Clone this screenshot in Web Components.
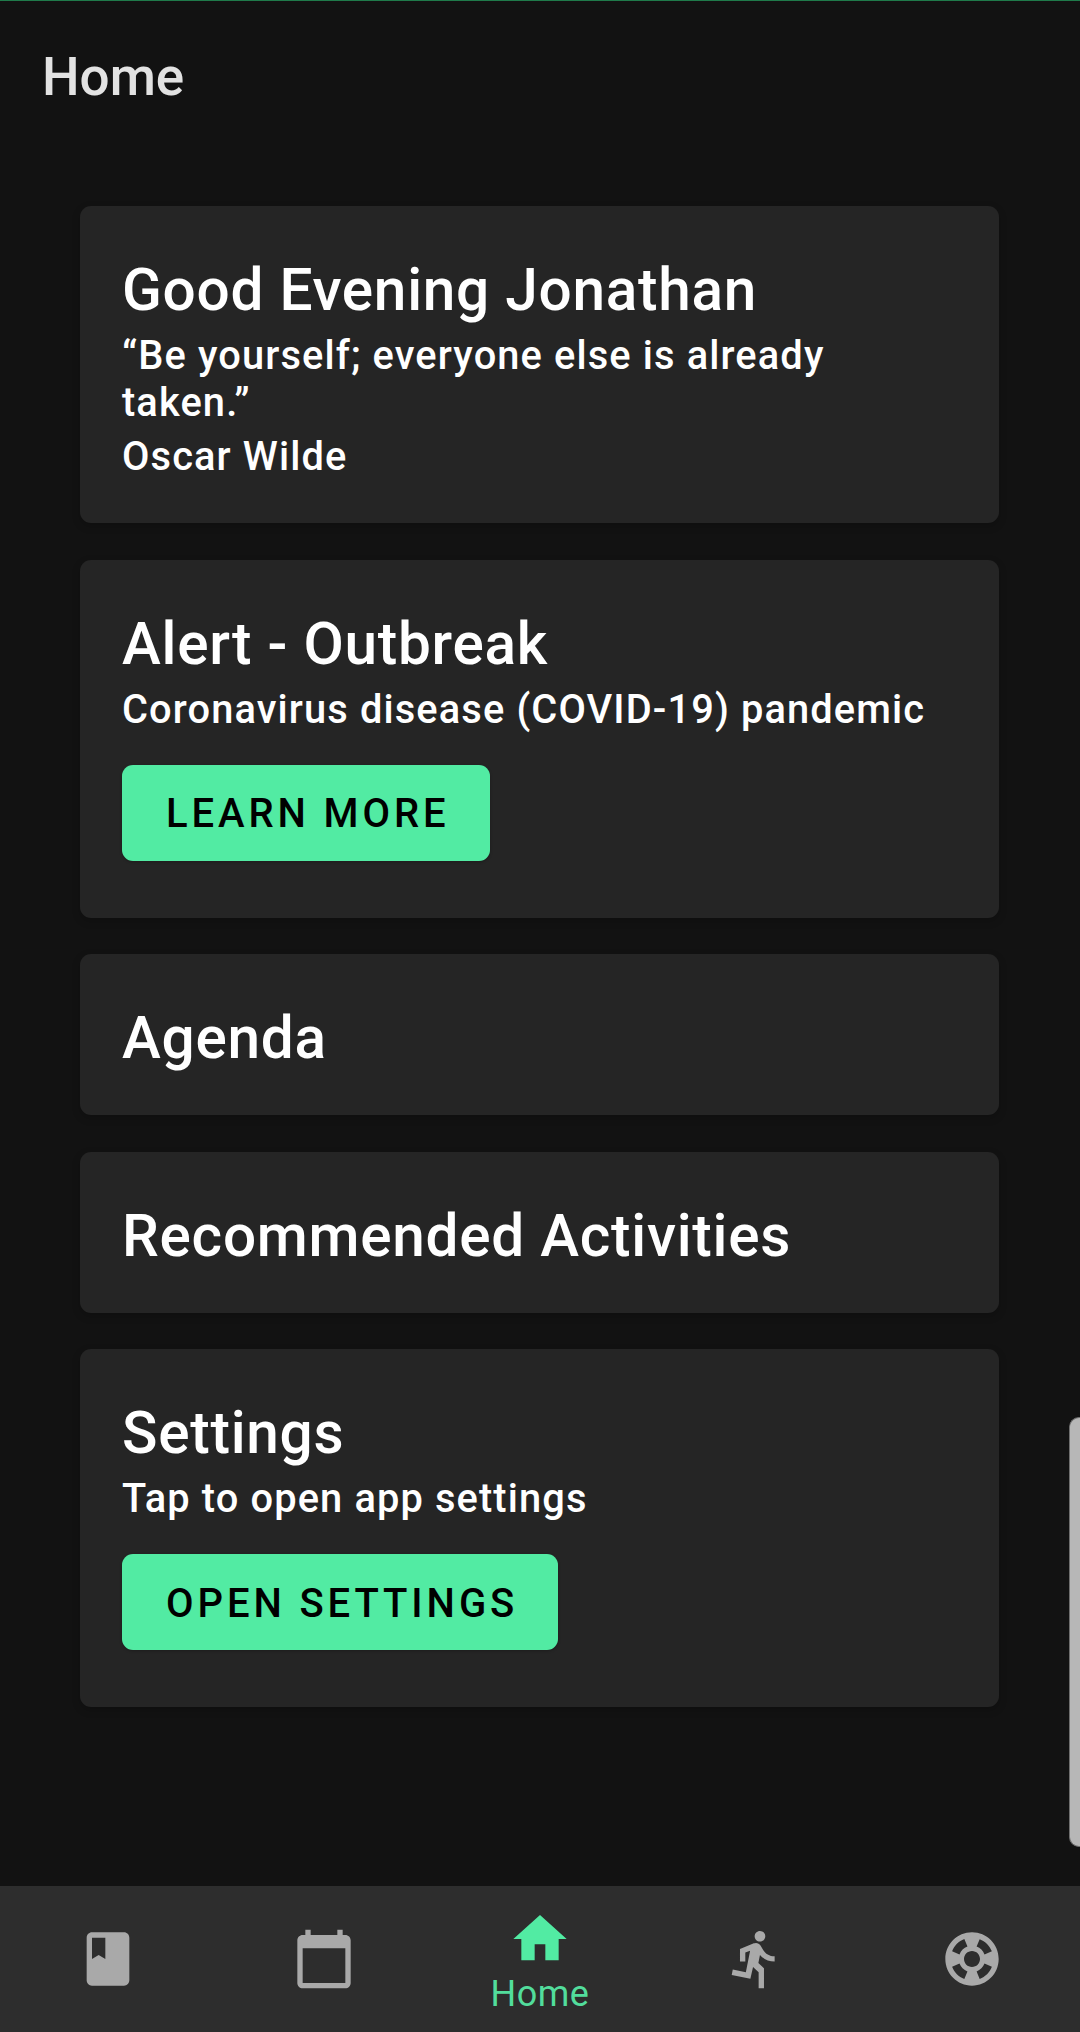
<!DOCTYPE html>
<html><head><meta charset="utf-8"><style>
html,body{margin:0;padding:0;background:#121212;font-family:Roboto,"Liberation Sans",sans-serif;}
body{height:2032px;overflow:hidden}
</style></head><body>
<app-shell></app-shell>
<script>
const ICONS={
book:'M18 2H6c-1.1 0-2 .9-2 2v16c0 1.1.9 2 2 2h12c1.1 0 2-.9 2-2V4c0-1.1-.9-2-2-2zM6 4h5v8l-2.5-1.5L6 12V4z',
cal:'M20 3h-1V1h-2v2H7V1H5v2H4c-1.1 0-2 .9-2 2v16c0 1.1.9 2 2 2h16c1.1 0 2-.9 2-2V5c0-1.1-.9-2-2-2zm0 18H4V8h16v13z',
home:'M10 20v-6h4v6h5v-8h3L12 3 2 12h3v8z',
run:'M13.49 5.48c1.1 0 2-.9 2-2s-.9-2-2-2-2 .9-2 2 .9 2 2 2zm-3.6 13.9l1-4.4 2.1 2v6h2v-7.5l-2.1-2 .6-3c1.3 1.5 3.3 2.5 5.5 2.5v-2c-1.9 0-3.5-1-4.3-2.4l-1-1.6c-.4-.6-1-1-1.7-1-.3 0-.5.1-.8.1l-5.2 2.2v4.7h2v-3.4l1.8-.7-1.6 8.1-4.9-1-.4 2 7 1.4z',
help:'M12 2C6.48 2 2 6.48 2 12s4.48 10 10 10 10-4.48 10-10S17.52 2 12 2zm7.46 7.12l-2.78 1.15c-.51-1.36-1.58-2.44-2.95-2.94l1.15-2.78c2.1.8 3.77 2.47 4.58 4.57zM12 15c-1.66 0-3-1.34-3-3s1.34-3 3-3 3 1.34 3 3-1.34 3-3 3zM9.13 4.54l1.17 2.78c-1.38.5-2.47 1.59-2.98 2.97L4.54 9.13c.81-2.11 2.48-3.78 4.59-4.59zM4.54 14.87l2.78-1.15c.51 1.38 1.59 2.46 2.97 2.96l-1.17 2.78c-2.1-.81-3.77-2.48-4.58-4.59zm10.34 4.59l-1.15-2.78c1.37-.51 2.45-1.59 2.95-2.97l2.78 1.17c-.81 2.1-2.48 3.77-4.58 4.58z'
};
class HomeCard extends HTMLElement{
 constructor(){super();this.attachShadow({mode:'open'}).innerHTML=`<style>
 :host{display:block;background:#252525;border-radius:11px;padding:46px 42px 38px;box-shadow:0 3px 8px rgba(0,0,0,.2)}
 h2{margin:0;font:500 58.5px/77px Roboto,sans-serif;letter-spacing:.73px;color:#fff}
 ::slotted(p){margin:0;font:500 39.8px/47px Roboto,sans-serif;letter-spacing:1.12px;color:#fff}
 ::slotted(p.lead){margin-top:3px}
 ::slotted(p.author){margin:7px 0 5px}
 </style><h2></h2><slot></slot>`;
 this.shadowRoot.querySelector('h2').textContent=this.getAttribute('heading');}
}
customElements.define('home-card',HomeCard);
class GreenButton extends HTMLElement{
 constructor(){super();this.attachShadow({mode:'open'}).innerHTML=`<style>
 :host{display:inline-flex;align-items:center;box-sizing:border-box;height:96px;padding:3px 40px 0 44px;margin:32px 0 19px;vertical-align:top;background:#52eba3;border-radius:11px;color:#000;font:500 40px/1 Roboto,sans-serif;letter-spacing:3.9px;box-shadow:0 1px 3px rgba(0,0,0,.25)}
 </style><slot></slot>`;}
}
customElements.define('green-button',GreenButton);
class NavItem extends HTMLElement{
 constructor(){super();const active=this.hasAttribute('active');const c=active?'#52eba3':'#a9a9a9';
 this.attachShadow({mode:'open'}).innerHTML=`<style>
 :host{display:flex;flex-direction:column;align-items:center;padding-top:${active?21:41}px}
 svg{display:block;width:64px;height:64px;fill:${c}}
 span{font:400 36px/40px Roboto,sans-serif;letter-spacing:.5px;color:#52dd9c;margin-top:3px}
 </style><svg viewBox="0 0 24 24"><path d="${ICONS[this.getAttribute('icon')]}"/></svg>${active?'<span><slot></slot></span>':''}`;}
}
customElements.define('nav-item',NavItem);
class AppShell extends HTMLElement{
 constructor(){super();this.attachShadow({mode:'open'}).innerHTML=`<style>
 :host{display:flex;flex-direction:column;height:2032px;position:relative;color:#fff}
 .line{height:1px;background:#1f7a4a;flex:none}
 header{flex:none;height:205px;box-sizing:border-box;padding:43px 42px 0;font:500 53px/66px Roboto,sans-serif;color:#e2e2e2}
 main{flex:1;min-height:0;display:flex;flex-direction:column;gap:36.6px;padding:0 81px 0 80px}
 nav{flex:none;height:146px;background:#2d2d2d;display:grid;grid-template-columns:repeat(5,1fr)}
 .bar{position:absolute;right:0;top:1417px;width:10px;height:428px;background:#b7b7b7;border:1px solid #6e6e6e;border-right:0;border-radius:10px 0 0 10px}
 </style><div class="line"></div><header>Home</header>
 <main>
 <home-card heading="Good Evening Jonathan"><p class="lead">“Be yourself; everyone else is already taken.”</p><p class="author">Oscar Wilde</p></home-card>
 <home-card heading="Alert - Outbreak"><p class="lead">Coronavirus disease (COVID-19) pandemic</p><green-button>LEARN MORE</green-button></home-card>
 <home-card heading="Agenda"></home-card>
 <home-card heading="Recommended Activities"></home-card>
 <home-card heading="Settings"><p class="lead">Tap to open app settings</p><green-button>OPEN SETTINGS</green-button></home-card>
 </main>
 <nav><nav-item icon="book"></nav-item><nav-item icon="cal"></nav-item><nav-item icon="home" active>Home</nav-item><nav-item icon="run"></nav-item><nav-item icon="help"></nav-item></nav>
 <div class="bar"></div>`;}
}
customElements.define('app-shell',AppShell);
</script>
</body></html>
